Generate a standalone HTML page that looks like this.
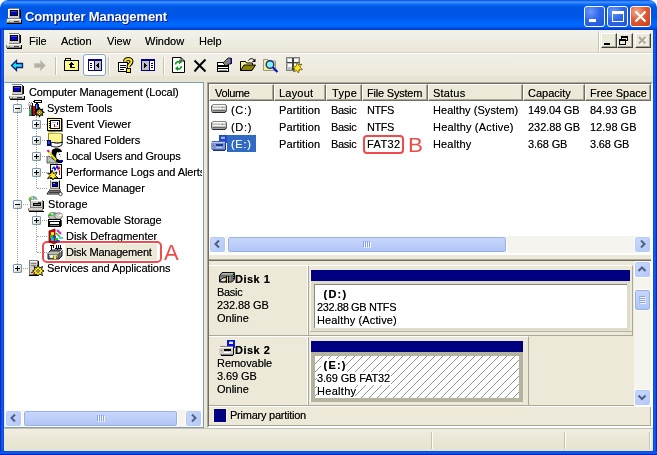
<!DOCTYPE html>
<html><head><meta charset="utf-8"><title>Computer Management</title>
<style>
*{box-sizing:border-box;margin:0;padding:0}
html,body{width:657px;height:455px;overflow:hidden}
body{background:#fff;font-family:"Liberation Sans","DejaVu Sans",sans-serif;font-size:11px;color:#000;position:relative;line-height:13px}
.abs{position:absolute}
svg{position:absolute;overflow:visible}
#win{position:absolute;left:0;top:0;width:657px;height:455px;background:#ece9d8;overflow:hidden;border-radius:7px 7px 0 0;will-change:transform}
#title{position:absolute;left:0;top:0;width:657px;height:30px;border-radius:8px 8px 0 0;
background:linear-gradient(to bottom,#0046d5 0%,#2d7ffc 4%,#3c8fff 8%,#1f78fb 12%,#0361ee 18%,#0055e3 27%,#0056e6 55%,#0061f7 70%,#0068ff 82%,#0062f8 90%,#0048dd 95%,#0035c4 100%)}
#ttext{position:absolute;left:25px;top:9px;letter-spacing:-0.13px;font-weight:bold;font-size:13px;line-height:16px;color:#fff;text-shadow:1px 1px 0 #0a1883;white-space:nowrap}
.bl{position:absolute;left:0;top:30px;width:4px;height:425px;background:linear-gradient(to right,#0019cf 0,#0831d9 25%,#166aee 50%,#0855dd 75%,#0048cf 100%)}
.br{position:absolute;right:0;top:30px;width:4px;height:425px;background:linear-gradient(to left,#0019cf 0,#0831d9 25%,#166aee 50%,#0855dd 75%,#0048cf 100%)}
.bb{position:absolute;left:0;bottom:0;width:657px;height:4px;background:linear-gradient(to top,#0019cf 0,#0831d9 25%,#166aee 50%,#0855dd 75%,#0048cf 100%)}
.tb{position:absolute;top:6px;width:21px;height:21px;border:1px solid #fff;border-radius:3px;background:radial-gradient(circle at 30% 25%,#6a9bff 0,#3068ea 45%,#2152d6 100%)}
.tb.close{background:radial-gradient(circle at 30% 25%,#f4ab8e 0,#e25a34 45%,#c73d1d 100%)}
.t{position:absolute;white-space:nowrap;font-size:11px;line-height:13px;text-shadow:0 0 0 rgba(0,0,0,.55)}
.b{font-weight:bold}
.pane{position:absolute;background:#fff}
.hdr{position:absolute;height:17px;background:#ece9d8;border:1px solid;border-color:#fff #716f64 #716f64 #fff;box-shadow:inset -1px -1px 0 #aca899}
.hdr span{position:absolute;top:2px;left:5px;white-space:nowrap;text-shadow:0 0 0 rgba(0,0,0,.55)}
.sbtn{position:absolute;width:17px;height:17px;border:1px solid #fff;border-radius:3px;background:linear-gradient(135deg,#cbd9fc,#b3c8f7);box-shadow:0 0 0 1px #b7caf5 inset}
.thumb{position:absolute;border:1px solid #fff;border-radius:3px;background:linear-gradient(to bottom,#c9d7fc,#baccf8 60%,#b0c4f5);box-shadow:0 0 0 1px #98b1e4 inset}
.vline{position:absolute;border-left:1px dotted #a0a0a0;width:0}
.hline{position:absolute;border-top:1px dotted #a0a0a0;height:0}
.pm{position:absolute;width:9px;height:9px;border:1px solid #7898b5;border-radius:1px;background:linear-gradient(135deg,#fff 20%,#cfcab8)}
.pm i{position:absolute;left:1px;top:3px;width:5px;height:1px;background:#000}
.pm b{position:absolute;left:3px;top:1px;width:1px;height:5px;background:#000}
.sep{position:absolute;top:57px;width:2px;height:18px;border-left:1px solid #c5c2b2;border-right:1px solid #fff}
.mdi{position:absolute;top:33px;width:16px;height:15px;background:#ece9d8;border:1px solid;border-color:#fff #404040 #404040 #fff;box-shadow:inset -1px -1px 0 #aca899}
</style></head><body>
<div id="win">
<div id="title"></div>
<div class="bl"></div><div class="br"></div><div class="bb"></div>
<div id="ttext">Computer Management</div>
<div class="abs" style="left:4px;top:30px;width:649px;height:22px;background:linear-gradient(to bottom,#f3f2ec,#edeade 70%,#eae7d9)"></div>
<svg style="left:6px;top:8px" width="16" height="16" viewBox="0 0 16 16" shape-rendering="crispEdges"><rect x="3" y="0" width="10" height="1" fill="#808080"/><rect x="2" y="1" width="12" height="9" fill="#d4d0c8"/><rect x="2" y="1" width="1" height="9" fill="#fff"/><rect x="3" y="1" width="10" height="1" fill="#fff"/><rect x="13" y="1" width="1" height="9" fill="#404040"/><rect x="14" y="2" width="1" height="8" fill="#000"/><rect x="4" y="2" width="8" height="6" fill="#000"/><rect x="5" y="3" width="6" height="4" fill="#0000d0"/><rect x="5" y="3" width="6" height="1" fill="#3a3aff"/><rect x="3" y="10" width="11" height="1" fill="#808080"/><rect x="1" y="11" width="14" height="4" fill="#d4d0c8"/><rect x="1" y="11" width="14" height="1" fill="#fff"/><rect x="0" y="12" width="1" height="3" fill="#808080"/><rect x="15" y="12" width="1" height="3" fill="#000"/><rect x="1" y="15" width="15" height="1" fill="#000"/><rect x="1" y="14" width="14" height="1" fill="#808080"/><rect x="3" y="13" width="1" height="1" fill="#00d000"/><rect x="8" y="13" width="5" height="1" fill="#404040"/></svg>
<svg style="left:6px;top:33px" width="16" height="16" viewBox="0 0 16 16" shape-rendering="crispEdges"><rect x="3" y="0" width="10" height="1" fill="#808080"/><rect x="2" y="1" width="12" height="9" fill="#d4d0c8"/><rect x="2" y="1" width="1" height="9" fill="#fff"/><rect x="3" y="1" width="10" height="1" fill="#fff"/><rect x="13" y="1" width="1" height="9" fill="#404040"/><rect x="14" y="2" width="1" height="8" fill="#000"/><rect x="4" y="2" width="8" height="6" fill="#000"/><rect x="5" y="3" width="6" height="4" fill="#0000d0"/><rect x="5" y="3" width="6" height="1" fill="#3a3aff"/><rect x="3" y="10" width="11" height="1" fill="#808080"/><rect x="1" y="11" width="14" height="4" fill="#d4d0c8"/><rect x="1" y="11" width="14" height="1" fill="#fff"/><rect x="0" y="12" width="1" height="3" fill="#808080"/><rect x="15" y="12" width="1" height="3" fill="#000"/><rect x="1" y="15" width="15" height="1" fill="#000"/><rect x="1" y="14" width="14" height="1" fill="#808080"/><rect x="3" y="13" width="1" height="1" fill="#00d000"/><rect x="8" y="13" width="5" height="1" fill="#404040"/></svg>

<div class="tb" style="left:584px"><div class="abs" style="left:4px;top:12px;width:7px;height:3px;background:#fff"></div></div>
<div class="tb" style="left:607px"><div class="abs" style="left:4px;top:4px;width:12px;height:11px;border:1px solid #fff;border-top-width:3px"></div></div>
<div class="tb close" style="left:630px"><svg style="left:0;top:0" width="19" height="19"><path d="M4.500 4.500L14.500 14.500M14.500 4.500L4.500 14.500" stroke="#fff" stroke-width="2.300"/></svg></div>

<!-- menu -->
<div class="t" style="left:29px;top:35px">File</div>
<div class="t" style="left:61px;top:35px">Action</div>
<div class="t" style="left:107px;top:35px">View</div>
<div class="t" style="left:145px;top:35px">Window</div>
<div class="t" style="left:199px;top:35px">Help</div>
<div class="abs" style="left:598px;top:31px;width:2px;height:21px;border-left:1px solid #c9c6b6;border-right:1px solid #fff"></div>
<div class="mdi" style="left:601px"><div class="abs" style="left:2px;top:9px;width:6px;height:2px;background:#000"></div></div>
<div class="mdi" style="left:617px"><svg style="left:0;top:0" width="14" height="12" shape-rendering="crispEdges"><rect x="3" y="2" width="7" height="5" fill="#000"/><rect x="4" y="4" width="5" height="2" fill="#ece9d8"/><rect x="1" y="5" width="7" height="6" fill="#000"/><rect x="2" y="7" width="5" height="3" fill="#ece9d8"/></svg></div>
<div class="mdi" style="left:635px"><svg style="left:0;top:0" width="14" height="12"><path d="M3 3l6.500 6.500M9.500 3l-6.500 6.500" stroke="#fff" stroke-width="2" transform="translate(1,1)"/><path d="M3 3l6.500 6.500M9.500 3l-6.500 6.500" stroke="#aca899" stroke-width="2"/></svg></div>

<!-- toolbar -->
<div class="abs" style="left:4px;top:52px;width:649px;height:1px;background:#d8d4c3"></div>
<div class="abs" style="left:4px;top:53px;width:649px;height:1px;background:#fff"></div>
<div class="abs" style="left:4px;top:54px;width:649px;height:22px;background:linear-gradient(to bottom,#f1efe6,#edeadc)"></div>
<div class="abs" style="left:4px;top:76px;width:649px;height:6px;background:#e7e4d3"></div>
<div class="sep" style="left:55px"></div>
<div class="sep" style="left:108px"></div>
<div class="sep" style="left:163px"></div>
<div class="abs" style="left:83px;top:54px;width:23px;height:22px;border:1px solid #86a3cf;border-radius:3px;background:#fff"></div>
<svg style="left:10px;top:59px" width="14" height="13" viewBox="0 0 14 13"><path d="M6.500 1.500L1.500 6.500L6.500 11.500V8.500H12.500V4.500H6.500Z" fill="#22dcf8" stroke="#0c1f70" stroke-width="1.300"/></svg>
<svg style="left:33px;top:59px" width="14" height="13" viewBox="0 0 14 13"><path d="M7.500 1.500L12.500 6.500L7.500 11.500V8.500H1.500V4.500H7.500Z" fill="#b5b3a6" stroke="#c9c6b8" stroke-width="1"/></svg>
<svg style="left:64px;top:57px" width="16" height="15" viewBox="0 0 16 15" shape-rendering="crispEdges"><rect x="1" y="1" width="6" height="2" fill="#000"/><rect x="2" y="2" width="4" height="1" fill="#fdfb86"/><rect x="0" y="3" width="15" height="11" fill="#000"/><rect x="1" y="4" width="13" height="9" fill="#fdfb86"/><path d="M7 5L4 8H6V11H11V9.500H8V8H10Z" fill="#000"/></svg>
<svg style="left:88px;top:59px" width="14" height="12" viewBox="0 0 14 12" shape-rendering="crispEdges"><rect x="0" y="0" width="14" height="12" fill="#000080"/><rect x="1" y="2" width="12" height="9" fill="#c0c0c0"/><rect x="6" y="1" width="1" height="10" fill="#000080"/><rect x="1" y="2" width="5" height="9" fill="#fff"/><rect x="2" y="4" width="2" height="1" fill="#000"/><rect x="2" y="6" width="2" height="1" fill="#000"/><rect x="2" y="8" width="2" height="1" fill="#000"/><path d="M11 3.500L8 6.500L11 9.500Z" fill="#000"/></svg>
<svg style="left:118px;top:57px" width="15" height="16" viewBox="0 0 15 16"><rect x="0" y="5" width="10" height="10" fill="#000"/><rect x="1" y="6" width="8" height="8" fill="#fff"/><rect x="2" y="8" width="6" height="1" fill="#000"/><rect x="2" y="10" width="6" height="1" fill="#000"/><rect x="2" y="12" width="4" height="1" fill="#000"/><path d="M7 4.500C7 1 13.500 1 13.500 4.500C13.500 7 10.500 7 10.500 10" fill="none" stroke="#000" stroke-width="4"/><path d="M7 4.500C7 1 13.500 1 13.500 4.500C13.500 7 10.500 7 10.500 10" fill="none" stroke="#ffe81a" stroke-width="2"/><rect x="8" y="11" width="5" height="5" fill="#000"/><rect x="9" y="12" width="3" height="3" fill="#ffe81a"/></svg>
<svg style="left:141px;top:59px" width="14" height="12" viewBox="0 0 14 12" shape-rendering="crispEdges"><rect x="0" y="0" width="14" height="12" fill="#000080"/><rect x="1" y="2" width="12" height="9" fill="#c0c0c0"/><rect x="8" y="1" width="1" height="10" fill="#000080"/><rect x="9" y="2" width="4" height="9" fill="#fff"/><rect x="10" y="4" width="2" height="1" fill="#000"/><rect x="10" y="6" width="2" height="1" fill="#000"/><rect x="10" y="8" width="2" height="1" fill="#000"/><path d="M3 3.500L6 6.500L3 9.500Z" fill="#000"/></svg>
<svg style="left:172px;top:57px" width="13" height="16" viewBox="0 0 13 16"><path d="M0.500 0.500H9L12.500 4V15.500H0.500Z" fill="#fff" stroke="#000"/><path d="M9 0.500V4H12.500" fill="none" stroke="#000"/><path d="M3.500 7.500A3 3 0 0 1 8 5" fill="none" stroke="#0c9a1c" stroke-width="1.600"/><path d="M7 2.500L10 5L7 7.500Z" fill="#0c9a1c"/><path d="M9.500 9A3 3 0 0 1 5 11.500" fill="none" stroke="#0c9a1c" stroke-width="1.600"/><path d="M6 9L3 11.500L6 14Z" fill="#0c9a1c"/></svg>
<svg style="left:193px;top:59px" width="15" height="14" viewBox="0 0 15 14"><path d="M1.500 1.500L12.500 12.500M12.500 0.500C9 4 5 8 1.500 12.500" stroke="#000" stroke-width="2" fill="none"/></svg>
<svg style="left:216px;top:57px" width="17" height="16" viewBox="0 0 17 16"><rect x="1" y="5" width="12" height="10" fill="#000"/><rect x="2" y="6" width="10" height="8" fill="#fff"/><rect x="2" y="8" width="10" height="2" fill="#000"/><rect x="2" y="11" width="10" height="1" fill="#000"/><rect x="3" y="13" width="8" height="1" fill="#808080"/><path d="M7 6L12 1H15V7H13L10 9Z" fill="#808080" stroke="#000" stroke-width="0.800"/><rect x="15" y="1" width="1" height="6" fill="#0000c0"/></svg>
<svg style="left:240px;top:57px" width="16" height="15" viewBox="0 0 16 15"><path d="M0.500 13.500V4.500H5.500L6.500 6H12.500V8" fill="#f6f08a" stroke="#000"/><path d="M0.500 13.500L4 8H15.500L12 13.500Z" fill="#8b8400" stroke="#000"/><path d="M8.500 3.500C10 1 13 1 14.500 3.500" fill="none" stroke="#000"/><path d="M15.500 1.500V5H12Z" fill="#000"/></svg>
<svg style="left:263px;top:57px" width="16" height="16" viewBox="0 0 16 16"><path d="M0.500 13.500V2.500H5L6.500 4H12.500V13.500Z" fill="#f6f08a" stroke="#9a9788"/><circle cx="7" cy="7.500" r="3.800" fill="#7ff2ff" stroke="#1b2e8a" stroke-width="1.400"/><path d="M10 10.500L14.500 15" stroke="#0a14c8" stroke-width="2.200"/></svg>
<svg style="left:286px;top:57px" width="17" height="16" viewBox="0 0 17 16"><rect x="0" y="0" width="14" height="14" fill="#808080"/><rect x="1" y="1" width="12" height="12" fill="#c0c0c0"/><rect x="2" y="2" width="4" height="3" fill="#fff"/><rect x="8" y="2" width="4" height="3" fill="#fff"/><rect x="2" y="7" width="4" height="3" fill="#fff"/><rect x="8" y="7" width="4" height="3" fill="#fff"/><rect x="6" y="1" width="2" height="12" fill="#404040"/><rect x="1" y="5" width="12" height="1" fill="#404040"/><path d="M11 5L12.300 8.200L16 7L13.800 10L16.500 12.500L13 12.800L12.500 16L10.500 13.500L7.500 15L9 12L6.500 10L10 9.500Z" fill="#ffe81a" stroke="#5a4a00" stroke-width="0.700"/></svg>


<!-- tree pane -->
<div class="pane" id="tree" style="left:4px;top:82px;width:200px;height:346px;border:1px solid #7f9db9;border-left-color:#dfe8f4"></div>
<!-- tree lines -->
<div class="vline" style="left:17px;top:100px;height:168px"></div>
<div class="vline" style="left:36px;top:116px;height:72px"></div>
<div class="vline" style="left:36px;top:212px;height:40px"></div>
<div class="hline" style="left:18px;top:108px;width:10px"></div>
<div class="hline" style="left:18px;top:204px;width:10px"></div>
<div class="hline" style="left:18px;top:268px;width:10px"></div>
<div class="hline" style="left:37px;top:124px;width:10px"></div>
<div class="hline" style="left:37px;top:140px;width:10px"></div>
<div class="hline" style="left:37px;top:156px;width:10px"></div>
<div class="hline" style="left:37px;top:172px;width:10px"></div>
<div class="hline" style="left:37px;top:188px;width:10px"></div>
<div class="hline" style="left:37px;top:220px;width:10px"></div>
<div class="hline" style="left:37px;top:236px;width:10px"></div>
<div class="hline" style="left:37px;top:252px;width:10px"></div>
<div class="pm" style="left:13px;top:104px"><i></i></div>
<div class="pm" style="left:13px;top:200px"><i></i></div>
<div class="pm" style="left:13px;top:264px"><i></i><b></b></div>
<div class="pm" style="left:32px;top:120px"><i></i><b></b></div>
<div class="pm" style="left:32px;top:136px"><i></i><b></b></div>
<div class="pm" style="left:32px;top:152px"><i></i><b></b></div>
<div class="pm" style="left:32px;top:168px"><i></i><b></b></div>
<div class="pm" style="left:32px;top:216px"><i></i><b></b></div>
<!-- selection -->
<div class="abs" style="left:65px;top:244px;width:92px;height:16px;background:#ece9d8"></div>
<div class="t" id="t1" style="left:29px;top:86px;letter-spacing:-0.1px">Computer Management (Local)</div>
<div class="t" id="t2" style="left:47px;top:102px">System Tools</div>
<div class="t" id="t3" style="left:66px;top:118px;letter-spacing:0.05px">Event Viewer</div>
<div class="t" id="t4" style="left:66px;top:134px;letter-spacing:-0.08px">Shared Folders</div>
<div class="t" id="t5" style="left:66px;top:150px;letter-spacing:-0.19px">Local Users and Groups</div>
<div class="t" id="t6" style="left:66px;top:166px;width:136px;overflow:hidden;letter-spacing:-0.1px">Performance Logs and Alerts</div>
<div class="t" id="t7" style="left:66px;top:182px;letter-spacing:-0.1px">Device Manager</div>
<div class="t" id="t8" style="left:48px;top:198px;letter-spacing:0.2px">Storage</div>
<div class="t" id="t9" style="left:66px;top:214px;letter-spacing:-0.1px">Removable Storage</div>
<div class="t" id="t10" style="left:66px;top:230px;letter-spacing:-0.03px">Disk Defragmenter</div>
<div class="t" id="t11" style="left:66px;top:246px;letter-spacing:-0.2px">Disk Management</div>
<div class="t" id="t12" style="left:47px;top:262px;letter-spacing:-0.08px">Services and Applications</div>
<!-- red annotations -->
<div class="abs" style="left:42px;top:241px;width:120px;height:22px;border:2px solid #ee4b4f;border-radius:5px"></div>
<div class="abs" style="left:164px;top:241px;font-size:22px;line-height:24px;color:#ee4b4f">A</div>
<!-- tree scrollbar -->
<div class="abs" style="left:5px;top:410px;width:198px;height:17px;background:#f5f4ef"></div>
<div class="sbtn" style="left:5px;top:410px"></div>
<div class="sbtn" style="left:185px;top:410px"></div>
<div class="thumb" style="left:23px;top:410px;width:155px;height:17px"></div>

<svg style="left:9px;top:84px" width="16" height="16" viewBox="0 0 16 16" shape-rendering="crispEdges"><rect x="3" y="0" width="10" height="1" fill="#808080"/><rect x="2" y="1" width="12" height="9" fill="#d4d0c8"/><rect x="2" y="1" width="1" height="9" fill="#fff"/><rect x="3" y="1" width="10" height="1" fill="#fff"/><rect x="13" y="1" width="1" height="9" fill="#404040"/><rect x="14" y="2" width="1" height="8" fill="#000"/><rect x="4" y="2" width="8" height="6" fill="#000"/><rect x="5" y="3" width="6" height="4" fill="#0000d0"/><rect x="5" y="3" width="6" height="1" fill="#3a3aff"/><rect x="3" y="10" width="11" height="1" fill="#808080"/><rect x="1" y="11" width="14" height="4" fill="#d4d0c8"/><rect x="1" y="11" width="14" height="1" fill="#fff"/><rect x="0" y="12" width="1" height="3" fill="#808080"/><rect x="15" y="12" width="1" height="3" fill="#000"/><rect x="1" y="15" width="15" height="1" fill="#000"/><rect x="1" y="14" width="14" height="1" fill="#808080"/><rect x="3" y="13" width="1" height="1" fill="#00d000"/><rect x="8" y="13" width="5" height="1" fill="#404040"/></svg>
<svg style="left:28px;top:100px" width="16" height="16" viewBox="0 0 16 16"><rect x="1" y="2" width="1" height="1" fill="#808080"/><rect x="3" y="2" width="1" height="1" fill="#808080"/><rect x="0" y="3" width="5" height="3" fill="#c0c0c0"/><rect x="1" y="3" width="1" height="1" fill="#fff"/><rect x="3" y="4" width="1" height="1" fill="#fff"/><rect x="2" y="5" width="2" height="1" fill="#808080"/><rect x="6" y="0" width="8" height="3" fill="#000"/><rect x="7" y="1" width="6" height="1" fill="#fff"/><rect x="8" y="3" width="2" height="1" fill="#000"/><rect x="5" y="1" width="1" height="1" fill="#000"/><rect x="1" y="6" width="3" height="10" fill="#404040"/><rect x="2" y="6" width="1" height="3" fill="#c0c0c0"/><rect x="2" y="9" width="1" height="6" fill="#00d040"/><rect x="1" y="9" width="1" height="6" fill="#808080"/><rect x="4" y="3" width="1" height="13" fill="#000"/><rect x="5" y="6" width="2" height="9" fill="#e80000"/><rect x="5" y="15" width="2" height="1" fill="#000"/><rect x="7" y="4" width="1" height="11" fill="#000"/><rect x="8" y="4" width="2" height="8" fill="#1010c0"/><rect x="8" y="5" width="1" height="5" fill="#00e0ff"/><rect x="10" y="4" width="1" height="7" fill="#000"/><path d="M15.800 12.300L14 13.300L14.500 15.300L12.500 14.800L11.500 16.600L10.500 14.800L8.500 15.300L9 13.300L7.200 12.300L9 11.300L8.500 9.300L10.500 9.800L11.500 8L12.500 9.800L14.500 9.300L14 11.300Z" fill="#ffe81a" stroke="#000" stroke-width="1.100"/><circle cx="11.500" cy="12.300" r="1.100" fill="#fff" stroke="#000" stroke-width="0.600"/></svg>
<svg style="left:47px;top:116px" width="16" height="16" viewBox="0 0 16 16" shape-rendering="crispEdges"><rect x="1" y="1" width="6" height="2" fill="#f4ee70"/><rect x="0" y="2" width="15" height="13" fill="#000"/><rect x="1" y="3" width="13" height="11" fill="#fbf78c"/><rect x="15" y="3" width="1" height="13" fill="#808080"/><rect x="1" y="15" width="14" height="1" fill="#808080"/><rect x="3" y="4" width="10" height="9" fill="#000"/><rect x="4" y="5" width="8" height="7" fill="#fff"/><rect x="2" y="5" width="2" height="1" fill="#000"/><rect x="2" y="7" width="2" height="1" fill="#000"/><rect x="2" y="9" width="2" height="1" fill="#000"/><rect x="2" y="11" width="2" height="1" fill="#000"/><rect x="7" y="8" width="1" height="3" fill="#e00000"/><rect x="10" y="6" width="1" height="3" fill="#0000e0"/><rect x="5" y="6" width="4" height="1" fill="#c0c0c0"/><rect x="8" y="10" width="3" height="1" fill="#c0c0c0"/></svg>
<svg style="left:47px;top:132px" width="16" height="16" viewBox="0 0 16 16"><rect x="2" y="0" width="6" height="2" fill="#f0ea60"/><rect x="1" y="1" width="14" height="10" fill="#b8b050"/><rect x="2" y="2" width="12" height="8" fill="#fcf890"/><rect x="15" y="2" width="1" height="9" fill="#606060"/><rect x="1" y="1" width="1" height="10" fill="#8a8428"/><rect x="0" y="8" width="4" height="6" fill="#000080"/><rect x="1" y="9" width="2" height="3" fill="#2040e0"/><path d="M4 11C6 9 9 13 15 10V13C11 16 7 15 4 14Z" fill="#fff" stroke="#000" stroke-width="1"/></svg>
<svg style="left:47px;top:148px" width="16" height="16" viewBox="0 0 16 16"><path d="M5 2C8 -1 15 0 15 4L12 4L14 8L11 12L6 12L4 8Z" fill="#000"/><path d="M10 4L13 5L14 8L12 11L10 11L9 8Z" fill="#fff"/><rect x="12" y="6" width="1" height="1" fill="#0000e0"/><path d="M9 11L15 13V15H8Z" fill="#000"/><rect x="13" y="12" width="3" height="2" fill="#0000c0"/><path d="M0 9L2 8L11 15H0Z" fill="#c0c0c0" stroke="#404040" stroke-width="0.800"/><rect x="2" y="13" width="1" height="1" fill="#00c000"/><path d="M1 3L9 12" stroke="#e8e020" stroke-width="2"/><path d="M0.500 2L2 4" stroke="#e000a0" stroke-width="2"/></svg>
<svg style="left:47px;top:164px" width="16" height="16" viewBox="0 0 16 16"><rect x="3" y="0" width="12" height="15" fill="#000"/><rect x="4" y="1" width="10" height="13" fill="#fff"/><path d="M5 5L7 3L8 6L10 2L11 5" fill="none" stroke="#0000e0" stroke-width="1.200"/><path d="M11 6L12 3L13 5" fill="none" stroke="#e00000" stroke-width="1.200"/><rect x="12" y="6" width="1" height="5" fill="#e00000"/><path d="M5 6L6.500 9.500L10 8L8.500 11.500L11 14L7.500 13.800L6 16L4.500 13.500L0.500 14.500L3 11.500L0.500 9L4 9.500Z" fill="#ffe81a" stroke="#000" stroke-width="0.900"/></svg>
<svg style="left:47px;top:180px" width="16" height="16" viewBox="0 0 16 16"><rect x="3" y="0" width="10" height="9" fill="#808080"/><rect x="4" y="0" width="8" height="8" fill="#d4d0c8"/><rect x="4" y="0" width="8" height="1" fill="#fff"/><rect x="12" y="1" width="1" height="8" fill="#000"/><rect x="5" y="2" width="6" height="5" fill="#000"/><rect x="6" y="3" width="4" height="3" fill="#0000d0"/><rect x="6" y="3" width="2" height="1" fill="#40a0ff"/><rect x="2" y="9" width="12" height="2" fill="#808080"/><rect x="3" y="9" width="10" height="1" fill="#d4d0c8"/><path d="M2 11H13L15 14H0Z" fill="#d4d0c8" stroke="#000" stroke-width="0.900"/><rect x="2" y="12" width="11" height="1" fill="#404040"/><circle cx="13.500" cy="14" r="1.700" fill="#fff" stroke="#404040" stroke-width="0.900"/></svg>
<svg style="left:28px;top:196px" width="16" height="16" viewBox="0 0 16 16"><ellipse cx="5" cy="3.500" rx="4" ry="3" fill="#c0c0c0" stroke="#808080" stroke-width="0.800"/><path d="M5 3.500L2 1.500L5 0.500Z" fill="#ffe81a"/><path d="M5 3.500L5 0.500L8 1.500Z" fill="#20c0ff"/><path d="M5 3.500L1 3.500L2 1.500Z" fill="#20c020"/><rect x="2" y="4" width="13" height="8" fill="#808080"/><rect x="3" y="4" width="11" height="7" fill="#d4d0c8"/><rect x="3" y="4" width="11" height="1" fill="#fff"/><rect x="15" y="5" width="1" height="8" fill="#000"/><rect x="5" y="7" width="8" height="3" fill="#000"/><rect x="6" y="8" width="6" height="1" fill="#808080"/><rect x="10" y="6" width="3" height="1" fill="#404040"/><rect x="0" y="12" width="15" height="3" fill="#808080"/><rect x="1" y="12" width="13" height="2" fill="#d4d0c8"/><rect x="1" y="15" width="15" height="1" fill="#000"/></svg>
<svg style="left:47px;top:212px" width="16" height="16" viewBox="0 0 16 16"><ellipse cx="6" cy="4" rx="4.500" ry="3.500" fill="#c0c0c0" stroke="#606060" stroke-width="0.800"/><path d="M6 4L3 1.500L6 0.500Z" fill="#ffe81a"/><path d="M6 4L6 0.500L9 1.500Z" fill="#20c0ff"/><path d="M6 4L1.500 4L3 1.500Z" fill="#20c020"/><ellipse cx="11.500" cy="4" rx="4" ry="3.200" fill="#d4d0c8" stroke="#606060" stroke-width="0.800"/><path d="M11.500 4L14 1.500L15.500 4Z" fill="#fff"/><rect x="1" y="7" width="13" height="8" fill="#000"/><rect x="2" y="8" width="11" height="1" fill="#fff"/><rect x="3" y="10" width="9" height="2" fill="#fff"/><rect x="3" y="13" width="9" height="1" fill="#808080"/><rect x="14" y="8" width="1" height="6" fill="#404040"/></svg>
<svg style="left:47px;top:228px" width="16" height="16" viewBox="0 0 16 16"><path d="M2 3L8 1V12L2 14Z" fill="#e00000" stroke="#800000" stroke-width="0.800"/><path d="M2 14L8 12L13 13L7 16Z" fill="#c00000" stroke="#800000" stroke-width="0.600"/><rect x="4" y="4" width="3" height="3" fill="#ffe81a"/><rect x="3" y="7" width="3" height="3" fill="#20c020"/><rect x="6" y="8" width="3" height="3" fill="#2040e0"/><rect x="4" y="10" width="3" height="3" fill="#00c0ff"/><rect x="8" y="10" width="3" height="3" fill="#20c020"/><rect x="9" y="12" width="3" height="2" fill="#2040e0"/><path d="M10 2L14 6" stroke="#e020c0" stroke-width="2"/><path d="M9 5L13 9" stroke="#20c020" stroke-width="1.600"/><path d="M12 10H16" stroke="#00d0e0" stroke-width="1.600"/></svg>
<svg style="left:47px;top:244px" width="16" height="16" viewBox="0 0 16 16"><rect x="3" y="1" width="4" height="1" fill="#000"/><rect x="4" y="2" width="1" height="3" fill="#000"/><rect x="6" y="2" width="1" height="2" fill="#000"/><rect x="9" y="1" width="1" height="3" fill="#000"/><rect x="11" y="1" width="1" height="3" fill="#000"/><rect x="13" y="1" width="1" height="3" fill="#000"/><rect x="8" y="4" width="7" height="1" fill="#000"/><rect x="10" y="4" width="1" height="2" fill="#0000c0"/><rect x="4" y="5" width="1" height="2" fill="#0000c0"/><path d="M1 9L4 6H15V12L12 15H1Z" fill="#808080" stroke="#000" stroke-width="0.900"/><path d="M1 9H12L15 6" fill="none" stroke="#fff" stroke-width="0.900"/><path d="M12 9V15" stroke="#404040"/><rect x="2" y="11" width="8" height="1" fill="#c0c0c0"/><rect x="12" y="8" width="1" height="1" fill="#00e000"/><rect x="7" y="11" width="2" height="4" fill="#ffe81a"/><circle cx="4.500" cy="12.500" r="1.500" fill="#fff"/></svg>
<svg style="left:28px;top:260px" width="16" height="16" viewBox="0 0 16 16"><rect x="1" y="0" width="9" height="15" fill="#808080"/><rect x="2" y="1" width="7" height="13" fill="#d4d0c8"/><rect x="2" y="1" width="7" height="1" fill="#fff"/><rect x="10" y="1" width="1" height="14" fill="#000"/><rect x="1" y="15" width="10" height="1" fill="#000"/><rect x="3" y="3" width="5" height="1" fill="#808080"/><rect x="3" y="5" width="5" height="1" fill="#808080"/><rect x="3" y="12" width="2" height="1" fill="#e00000"/><path d="M10 5L11.500 8L14.500 6.500L13.500 9.500L16 11L13.500 12.500L14.500 15.500L11.500 14L10 16L8.500 14L5.500 15.500L6.500 12.500L4.500 11L7 9.500L6 6.500L8.500 8Z" fill="#ffe81a" stroke="#000" stroke-width="0.900"/><circle cx="10" cy="11" r="1.300" fill="#fff" stroke="#000" stroke-width="0.700"/></svg>

<!-- right pane sunken frame -->
<div class="abs" style="left:207px;top:82px;width:446px;height:346px;border:1px solid;border-color:#aca899 #fff #fff #aca899"></div>
<div class="abs" style="left:208px;top:83px;width:444px;height:344px;border:1px solid;border-color:#716f64 #fff #fff #716f64;background:#ece9d8"></div>
<!-- list view -->
<div class="abs" style="left:209px;top:84px;width:442px;height:170px;background:#fff"></div>
<div class="abs" style="left:209px;top:84px;width:442px;height:17px;background:#ece9d8;border-bottom:1px solid #aca899"></div>
<div class="hdr" style="left:209px;top:84px;width:65px"><span id="h1" style="letter-spacing:-0.35px">Volume</span></div>
<div class="hdr" style="left:274px;top:84px;width:52px"><span id="h2" style="left:4px;letter-spacing:0.2px">Layout</span></div>
<div class="hdr" style="left:326px;top:84px;width:36px"><span id="h3" style="letter-spacing:0.3px">Type</span></div>
<div class="hdr" style="left:362px;top:84px;width:66px"><span id="h4" style="left:4px;letter-spacing:-0.2px">File System</span></div>
<div class="hdr" style="left:428px;top:84px;width:95px"><span id="h5" style="left:4px;letter-spacing:0.2px">Status</span></div>
<div class="hdr" style="left:523px;top:84px;width:62px"><span id="h6" style="left:4px">Capacity</span></div>
<div class="hdr" style="left:585px;top:84px;width:66px"><span id="h7" style="left:4px">Free Space</span></div>
<!-- selection -->
<div class="abs" style="left:227px;top:135px;width:29px;height:17px;background:#316ac5"></div>
<!-- rows -->
<div class="t" id="r1a" style="left:231px;top:104px;letter-spacing:0.7px">(C:)</div>
<div class="t" id="r1b" style="left:279px;top:104px;letter-spacing:0.1px">Partition</div>
<div class="t" id="r1c" style="left:331px;top:104px;letter-spacing:-0.3px">Basic</div>
<div class="t" id="r1d" style="left:367px;top:104px;letter-spacing:-0.5px">NTFS</div>
<div class="t" id="r1e" style="left:433px;top:104px;letter-spacing:0.05px">Healthy (System)</div>
<div class="t" id="r1f" style="left:528px;top:104px;letter-spacing:-0.12px">149.04 GB</div>
<div class="t" id="r1g" style="left:590px;top:104px">84.93 GB</div>
<div class="t" id="r2a" style="left:231px;top:121px;letter-spacing:0.7px">(D:)</div>
<div class="t" id="r2b" style="left:279px;top:121px;letter-spacing:0.1px">Partition</div>
<div class="t" id="r2c" style="left:331px;top:121px;letter-spacing:-0.3px">Basic</div>
<div class="t" id="r2d" style="left:367px;top:121px;letter-spacing:-0.5px">NTFS</div>
<div class="t" id="r2e" style="left:433px;top:121px;letter-spacing:0.19px">Healthy (Active)</div>
<div class="t" id="r2f" style="left:528px;top:121px;letter-spacing:-0.05px">232.88 GB</div>
<div class="t" id="r2g" style="left:590px;top:121px">12.98 GB</div>
<div class="t" id="r3a" style="text-shadow:0 0 0 rgba(255,255,255,.5);left:231px;top:138px;color:#fff;letter-spacing:0.7px">(E:)</div>
<div class="t" id="r3b" style="left:279px;top:138px;letter-spacing:0.1px">Partition</div>
<div class="t" id="r3c" style="left:331px;top:138px;letter-spacing:-0.3px">Basic</div>
<div class="t" id="r3d" style="left:367px;top:138px;letter-spacing:0.4px">FAT32</div>
<div class="t" id="r3e" style="left:433px;top:138px;letter-spacing:0.15px">Healthy</div>
<div class="t" id="r3f" style="left:528px;top:138px;letter-spacing:-0.15px">3.68 GB</div>
<div class="t" id="r3g" style="left:590px;top:138px;letter-spacing:-0.15px">3.68 GB</div>
<!-- red annotation B -->
<div class="abs" style="left:363px;top:135px;width:41px;height:19px;border:2px solid #ee4b4f;border-radius:4px"></div>
<div class="abs" style="left:408px;top:133px;font-size:20px;line-height:24px;color:#ee4b4f;transform:scaleX(1.12);transform-origin:0 0">B</div>
<!-- list hscroll -->
<div class="abs" style="left:209px;top:236px;width:442px;height:17px;background:#f5f4ef"></div>
<div class="sbtn" style="left:209px;top:236px"></div>
<div class="sbtn" style="left:634px;top:236px"></div>
<div class="thumb" style="left:227px;top:236px;width:280px;height:17px"></div>
<div class="abs" style="left:209px;top:253px;width:442px;height:2px;background:#fff"></div>
<!-- disk view -->
<div class="abs" style="left:209px;top:259px;width:442px;height:1px;background:#aca899"></div>
<div class="abs" style="left:209px;top:260px;width:442px;height:1px;background:#716f64"></div>
<!-- row 1 -->
<div class="abs" style="left:209px;top:265px;width:424px;height:71px;border-top:1px solid #fff;border-bottom:1px solid #aca899;border-right:1px solid #aca899"></div>
<div class="abs" style="left:307px;top:266px;width:2px;height:69px;border-left:1px solid #fff;border-right:1px solid #aca899"></div>
<div class="abs" style="left:310px;top:270px;width:1px;height:61px;background:#fbfaf6"></div>
<div class="abs" style="left:310px;top:331px;width:322px;height:1px;background:#b9b6a6"></div>
<div class="abs" style="left:311px;top:270px;width:319px;height:11px;background:#000080"></div>
<div class="abs" style="left:311px;top:281px;width:319px;height:50px;border:3px solid #e0dccc;background:#fff;box-shadow:inset 1px 1px 0 #8c8a80"></div>
<div class="t b" id="d1a" style="left:235px;top:273px;letter-spacing:0.5px">Disk 1</div>
<div class="t" id="d1b" style="left:217px;top:286px;letter-spacing:-0.3px">Basic</div>
<div class="t" id="d1c" style="left:217px;top:299px;letter-spacing:-0.1px">232.88 GB</div>
<div class="t" id="d1d" style="left:217px;top:312px">Online</div>
<div class="t b" id="p1a" style="left:323.6px;top:288px;letter-spacing:1.2px">(D:)</div>
<div class="t" id="p1b" style="left:317px;top:301px;letter-spacing:-0.37px">232.88 GB NTFS</div>
<div class="t" id="p1c" style="left:317px;top:314px;letter-spacing:0.14px">Healthy (Active)</div>
<!-- row 2 -->
<div class="abs" style="left:209px;top:336px;width:320px;height:70px;border-top:1px solid #fff;border-bottom:1px solid #aca899;border-right:1px solid #aca899"></div>
<div class="abs" style="left:529px;top:405px;width:105px;height:1px;background:#aca899"></div>
<div class="abs" style="left:307px;top:337px;width:2px;height:68px;border-left:1px solid #fff;border-right:1px solid #aca899"></div>
<div class="abs" style="left:310px;top:341px;width:1px;height:61px;background:#fbfaf6"></div>
<div class="abs" style="left:311px;top:341px;width:212px;height:11px;background:#000080"></div>
<div class="abs" style="left:311px;top:352px;width:212px;height:50px;border:4px solid #b5b2a0;background:#fff"></div>
<svg style="left:315px;top:356px" width="204" height="42" viewBox="0 0 204 42"><defs><pattern id="hatch" width="8" height="8" patternUnits="userSpaceOnUse"><path d="M-1 9L9 -1M-1 1L1 -1M7 9L9 7" stroke="#868686" stroke-width="0.9" fill="none"/></pattern></defs><rect width="204" height="42" fill="url(#hatch)"/></svg>
<div class="t b" id="d2a" style="left:235px;top:344px;letter-spacing:0.5px">Disk 2</div>
<div class="t" id="d2b" style="left:217px;top:357px;letter-spacing:-0.05px">Removable</div>
<div class="t" id="d2c" style="left:217px;top:370px;letter-spacing:-0.1px">3.69 GB</div>
<div class="t" id="d2d" style="left:217px;top:383px">Online</div>
<div class="abs" style="left:321px;top:359px;width:24px;height:13px;background:#fff"></div>
<div class="abs" style="left:317px;top:372px;width:74px;height:13px;background:#fff"></div>
<div class="abs" style="left:317px;top:385px;width:38px;height:13px;background:#fff"></div>
<div class="t b" id="p2a" style="left:323.6px;top:359px;letter-spacing:1.2px">(E:)</div>
<div class="t" id="p2b" style="left:317px;top:372px;letter-spacing:-0.15px">3.69 GB FAT32</div>
<div class="t" id="p2c" style="left:317px;top:385px;letter-spacing:0.3px">Healthy</div>
<!-- vscroll -->
<div class="abs" style="left:634px;top:261px;width:17px;height:145px;background:#f5f4ef"></div>
<div class="sbtn" style="left:634px;top:261px"></div>
<div class="sbtn" style="left:634px;top:389px"></div>
<div class="thumb" style="left:634px;top:289px;width:17px;height:22px"></div>
<!-- legend -->
<div class="abs" style="left:209px;top:406px;width:442px;height:1px;background:#fff"></div>
<div class="abs" style="left:214px;top:409px;width:12px;height:13px;background:#000080;box-shadow:0 0 0 1px #f4f2e8"></div>
<div class="t" id="lg" style="left:230px;top:409px;letter-spacing:-0.24px">Primary partition</div>
<div class="abs" style="left:209px;top:425px;width:442px;height:1px;background:#aca899"></div>
<div class="abs" style="left:650px;top:407px;width:1px;height:19px;background:#aca899"></div>
<div class="abs" style="left:209px;top:426px;width:442px;height:1px;background:#fff"></div>

<svg style="left:211px;top:104px" width="16" height="9" viewBox="0 0 16 9"><path d="M2 0.500H14.500L15.500 1.500V6.500L14 8.500H1.500L0.500 7V2Z" fill="#c4c4c4" stroke="#505050" stroke-width="0.900"/><path d="M2 1.500H14" stroke="#fff" stroke-width="1.300"/><path d="M1.500 4.500H13.500" stroke="#f4f4f4" stroke-width="1"/><path d="M1.500 6.500H14.500" stroke="#6a6a6a" stroke-width="1.200"/><path d="M1.500 8.300H14.200L15.500 6.500" fill="none" stroke="#1a1a1a" stroke-width="1"/><rect x="11" y="3" width="1" height="1" fill="#00a800"/></svg>
<svg style="left:211px;top:121px" width="16" height="9" viewBox="0 0 16 9"><path d="M2 0.500H14.500L15.500 1.500V6.500L14 8.500H1.500L0.500 7V2Z" fill="#c4c4c4" stroke="#505050" stroke-width="0.900"/><path d="M2 1.500H14" stroke="#fff" stroke-width="1.300"/><path d="M1.500 4.500H13.500" stroke="#f4f4f4" stroke-width="1"/><path d="M1.500 6.500H14.500" stroke="#6a6a6a" stroke-width="1.200"/><path d="M1.500 8.300H14.200L15.500 6.500" fill="none" stroke="#1a1a1a" stroke-width="1"/><rect x="11" y="3" width="1" height="1" fill="#00a800"/></svg>
<svg style="left:211px;top:135px" width="16" height="16" viewBox="0 0 16 16" shape-rendering="crispEdges"><rect x="8" y="0" width="8" height="8" fill="#2447c6"/><rect x="10" y="2" width="4" height="2" fill="#8fb0ec"/><rect x="10" y="1" width="4" height="1" fill="#2a7aa8"/><rect x="10" y="6" width="1" height="1" fill="#2aa0b8"/><rect x="13" y="6" width="1" height="1" fill="#2aa0b8"/><rect x="11" y="7" width="2" height="1" fill="#1a2f75"/><rect x="1" y="6" width="13" height="1" fill="#4a66aa"/><rect x="0" y="7" width="14" height="7" fill="#7d9ad6"/><rect x="0" y="7" width="14" height="1" fill="#b4c8f0"/><rect x="14" y="8" width="1" height="7" fill="#1a2f75"/><rect x="1" y="14" width="13" height="1" fill="#4a66aa"/><rect x="2" y="15" width="12" height="1" fill="#1a2f75"/><rect x="2" y="10" width="1" height="1" fill="#e02020"/><rect x="5" y="9" width="7" height="2" fill="#1f3a8c"/><rect x="5" y="12" width="6" height="1" fill="#b4c8f0"/></svg>
<svg style="left:219px;top:272px" width="16" height="12" viewBox="0 0 16 12"><path d="M3 0.500H15.500V7L13 10H0.500V4Z" fill="#8a8a8a" stroke="#101010" stroke-width="1"/><path d="M0.500 4H13L15.500 0.500M13 4V10" fill="none" stroke="#404040" stroke-width="0.800"/><path d="M3 1.700H14" stroke="#b4b4b4" stroke-width="1.400"/><rect x="11" y="3" width="1" height="1" fill="#00e000"/><rect x="14" y="2" width="1" height="1" fill="#000"/><rect x="14" y="4" width="1" height="1" fill="#000"/><rect x="14" y="6" width="1" height="1" fill="#000"/><path d="M1 8L4 6L8 5.500L7 9L5 10L2 9.500Z" fill="#e0e0e0" stroke="#000" stroke-width="0.900"/><rect x="8" y="5" width="1" height="6" fill="#ffe81a"/><rect x="7" y="4" width="1" height="7" fill="#000"/><rect x="9" y="4" width="1" height="7" fill="#000"/></svg>
<svg style="left:219px;top:340px" width="16" height="16" viewBox="0 0 16 16" shape-rendering="crispEdges"><rect x="8" y="0" width="8" height="8" fill="#1010d8"/><rect x="10" y="2" width="4" height="2" fill="#e4e8f0"/><rect x="10" y="1" width="4" height="1" fill="#208890"/><rect x="10" y="6" width="1" height="1" fill="#2aa0b8"/><rect x="13" y="6" width="1" height="1" fill="#2aa0b8"/><rect x="11" y="7" width="2" height="1" fill="#000"/><rect x="1" y="6" width="13" height="1" fill="#808080"/><rect x="0" y="7" width="14" height="7" fill="#d4d0c8"/><rect x="0" y="7" width="14" height="1" fill="#fff"/><rect x="14" y="8" width="1" height="7" fill="#000"/><rect x="1" y="14" width="13" height="1" fill="#808080"/><rect x="2" y="15" width="12" height="1" fill="#000"/><rect x="2" y="10" width="1" height="1" fill="#e02020"/><rect x="5" y="9" width="7" height="2" fill="#000"/><rect x="5" y="12" width="6" height="1" fill="#fff"/></svg>
<svg style="left:5px;top:410px" width="17" height="17" viewBox="0 0 17 17"><path d="M10 4.500L6.500 8L10 11.500" fill="none" stroke="#4d6185" stroke-width="2"/></svg>
<svg style="left:185px;top:410px" width="17" height="17" viewBox="0 0 17 17"><path d="M7 4.500L10.500 8L7 11.500" fill="none" stroke="#4d6185" stroke-width="2"/></svg>
<svg style="left:209px;top:236px" width="17" height="17" viewBox="0 0 17 17"><path d="M10 4.500L6.500 8L10 11.500" fill="none" stroke="#4d6185" stroke-width="2"/></svg>
<svg style="left:634px;top:236px" width="17" height="17" viewBox="0 0 17 17"><path d="M7 4.500L10.500 8L7 11.500" fill="none" stroke="#4d6185" stroke-width="2"/></svg>
<svg style="left:634px;top:261px" width="17" height="17" viewBox="0 0 17 17"><path d="M4.500 10L8 6.500L11.500 10" fill="none" stroke="#4d6185" stroke-width="2"/></svg>
<svg style="left:634px;top:389px" width="17" height="17" viewBox="0 0 17 17"><path d="M4.500 6.500L8 10L11.500 6.500" fill="none" stroke="#4d6185" stroke-width="2"/></svg>
<svg style="left:97px;top:415px" width="8" height="7" viewBox="0 0 8 7" shape-rendering="crispEdges"><rect x="0" y="0" width="1" height="6" fill="#8aa6e6"/><rect x="1" y="1" width="1" height="6" fill="#eef3fe"/><rect x="2" y="0" width="1" height="6" fill="#8aa6e6"/><rect x="3" y="1" width="1" height="6" fill="#eef3fe"/><rect x="4" y="0" width="1" height="6" fill="#8aa6e6"/><rect x="5" y="1" width="1" height="6" fill="#eef3fe"/><rect x="6" y="0" width="1" height="6" fill="#8aa6e6"/><rect x="7" y="1" width="1" height="6" fill="#eef3fe"/></svg>
<svg style="left:363px;top:241px" width="8" height="7" viewBox="0 0 8 7" shape-rendering="crispEdges"><rect x="0" y="0" width="1" height="6" fill="#8aa6e6"/><rect x="1" y="1" width="1" height="6" fill="#eef3fe"/><rect x="2" y="0" width="1" height="6" fill="#8aa6e6"/><rect x="3" y="1" width="1" height="6" fill="#eef3fe"/><rect x="4" y="0" width="1" height="6" fill="#8aa6e6"/><rect x="5" y="1" width="1" height="6" fill="#eef3fe"/><rect x="6" y="0" width="1" height="6" fill="#8aa6e6"/><rect x="7" y="1" width="1" height="6" fill="#eef3fe"/></svg>
<svg style="left:639px;top:296px" width="7" height="8" viewBox="0 0 7 8" shape-rendering="crispEdges"><rect x="0" y="0" width="6" height="1" fill="#8aa6e6"/><rect x="1" y="1" width="6" height="1" fill="#eef3fe"/><rect x="0" y="2" width="6" height="1" fill="#8aa6e6"/><rect x="1" y="3" width="6" height="1" fill="#eef3fe"/><rect x="0" y="4" width="6" height="1" fill="#8aa6e6"/><rect x="1" y="5" width="6" height="1" fill="#eef3fe"/><rect x="0" y="6" width="6" height="1" fill="#8aa6e6"/><rect x="1" y="7" width="6" height="1" fill="#eef3fe"/></svg>

<!-- status bar -->
<div class="abs" style="left:4px;top:428px;width:649px;height:1px;background:#c5c2b2"></div>
<div class="abs" style="left:4px;top:429px;width:649px;height:22px;background:linear-gradient(to bottom,#f0eee4,#ece9d8 30%,#e6e2cf)"></div>
<div class="abs" style="left:431px;top:432px;width:2px;height:17px;border-left:1px solid #c5c2b2;border-right:1px solid #fff"></div>
<div class="abs" style="left:564px;top:432px;width:2px;height:17px;border-left:1px solid #c5c2b2;border-right:1px solid #fff"></div>
<div class="abs" style="left:649px;top:432px;width:2px;height:17px;border-left:1px solid #c5c2b2;border-right:1px solid #fff"></div>

</div>
</body></html>
